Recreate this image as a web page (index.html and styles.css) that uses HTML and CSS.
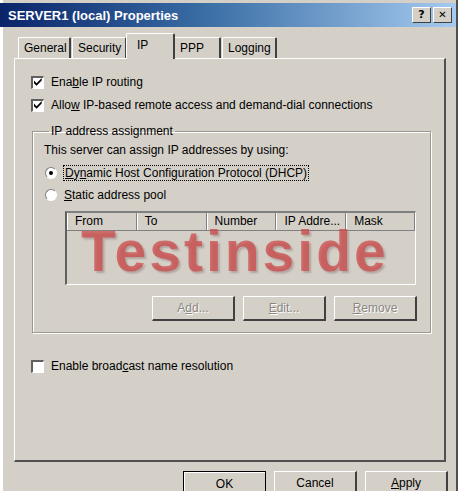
FILE: index.html
```html
<!DOCTYPE html>
<html>
<head>
<meta charset="utf-8">
<link rel="stylesheet" href="styles.css">
</head>
<body>
<div class="dialog">
  <div class="titlebar">
    <span class="title">SERVER1 (local) Properties</span>
    <div class="tbtns">
      <span class="tbtn">?</span>
      <span class="tbtn x">✕</span>
    </div>
  </div>
  <div class="tabs">
    <span class="tab t1">General</span>
    <span class="tab t2">Security</span>
    <span class="tab sel t3">IP</span>
    <span class="tab t4">PPP</span>
    <span class="tab t5">Logging</span>
  </div>
  <div class="panel">
    <div class="check row1">
      <span class="box"><svg width="9" height="9" viewBox="0 0 7 7"><path d="M0 2 L2 4 L6 0 L6 2 L2 6 L0 4 Z" fill="#000"/></svg></span>
      <span>Ena<u>b</u>le IP routing</span>
    </div>
    <div class="check row2">
      <span class="box"><svg width="9" height="9" viewBox="0 0 7 7"><path d="M0 2 L2 4 L6 0 L6 2 L2 6 L0 4 Z" fill="#000"/></svg></span>
      <span>Allo<u>w</u> IP-based remote access and demand-dial connections</span>
    </div>
    <fieldset class="group">
      <legend>IP address assignment</legend>
      <div class="intro">This server can assign IP addresses by using:</div>
      <div class="radio r1"><span class="rb on"></span><span class="focus"><u>D</u>y<u>n</u>amic Host Configuration Protocol (DHCP)</span></div>
      <div class="radio r2"><span class="rb"></span><span><u>S</u>tatic address pool</span></div>
      <div class="list">
        <div class="lhead">
          <span class="col">From</span>
          <span class="col">To</span>
          <span class="col">Number</span>
          <span class="col">IP Addre...</span>
          <span class="col">Mask</span>
        </div>
        <div class="watermark">Testinside</div>
      </div>
      <div class="lbtns">
        <span class="btn dis">A<u>d</u>d...</span>
        <span class="btn dis"><u>E</u>dit...</span>
        <span class="btn dis"><u>R</u>emove</span>
      </div>
    </fieldset>
    <div class="check row3">
      <span class="box"></span>
      <span>Enable broad<u>c</u>ast name resolution</span>
    </div>
  </div>
  <div class="footer">
    <span class="btn def">OK</span>
    <span class="btn">Cancel</span>
    <span class="btn"><u>A</u>pply</span>
  </div>
</div>
</body>
</html>
```
FILE: styles.css
```css
html, body {
  margin: 0;
  padding: 0;
  background: #ffffff;
}
body {
  font-family: "Liberation Sans", Arial, sans-serif;
  font-size: 12px;
  color: #000;
  width: 471px;
  height: 491px;
  overflow: hidden;
}
.dialog {
  margin-left: 2px;
  width: 453px;
  height: 500px;
  background: #d4d0c8;
  border-left: 1px solid #ffffff;
  border-right: 2px solid #505050;
  padding-top: 3px;
  box-sizing: content-box;
  background-clip: padding-box;
  display: flex;
  flex-direction: column;
}
.titlebar {
  height: 24px;
  margin-left: -3px;
  background: linear-gradient(to right, #0a246a 0%, #3a6ea5 45%, #a6caf0 100%);
  display: flex;
  align-items: center;
  justify-content: space-between;
  padding: 0 4px 0 8px;
}
.title {
  color: #fff;
  font-family: "Liberation Sans", Arial, sans-serif;
  font-weight: bold;
  font-size: 13px;
}
.tbtns {
  display: flex;
  gap: 2px;
}
.tbtn {
  width: 17px;
  height: 14px;
  background: #d4d0c8;
  border-top: 1px solid #fff;
  border-left: 1px solid #fff;
  border-right: 1px solid #404040;
  border-bottom: 1px solid #404040;
  font-family: "DejaVu Sans", sans-serif;
  font-weight: bold;
  font-size: 11px;
  line-height: 14px;
  text-align: center;
}
.tbtn.x { font-size: 10px; }
.tabs {
  display: flex;
  align-items: flex-end;
  margin-top: 6px;
  padding-left: 15px;
  height: 25px;
}
.tab {
  height: 21px;
  line-height: 21px;
  padding: 0 5px;
  border-top: 1px solid #fff;
  border-left: 1px solid #fff;
  border-right: 2px solid #404040;
  border-radius: 2px 2px 0 0;
  margin-right: 1px;
  box-sizing: border-box;
}
.t1 { width: 53px; }
.t2 { width: 55px; }
.t3 { width: 49px; }
.t4 { width: 47px; }
.t5 { width: 55px; }
.tab.sel {
  height: 26px;
  line-height: 22px;
  padding-left: 10px;
  margin-bottom: -1px;
  margin-left: -2px;
  margin-right: -1px;
  background: #d4d0c8;
  position: relative;
  z-index: 1;
}
.panel {
  margin-left: 11px;
  width: 432px;
  height: 404px;
  box-sizing: border-box;
  border-top: 1px solid #fff;
  border-left: 1px solid #fff;
  border-right: 2px solid #505050;
  border-bottom: 2px solid #505050;
  padding: 15px 0 0 16px;
  display: flex;
  flex-direction: column;
}
.check {
  display: flex;
  align-items: center;
  gap: 7px;
  height: 16px;
}
.row2 { margin-top: 7px; }
.row3 { margin-top: 25px; }
.box {
  width: 13px;
  height: 13px;
  box-sizing: border-box;
  border-top: 2px solid #606060;
  border-left: 2px solid #606060;
  border-right: 1px solid #fff;
  border-bottom: 1px solid #fff;
  background: #fff;
  display: flex;
  align-items: center;
  justify-content: center;
}
.group {
  margin: 11px 0 0 1px;
  width: 399px;
  height: 209px;
  box-sizing: border-box;
  border: 1px solid #9a9890;
  box-shadow: inset 1px 1px 0 #fff, 1px 1px 0 #fff;
  padding: 4px 0 0 11px;
  display: flex;
  flex-direction: column;
}
.group legend {
  padding: 0 2px;
  margin-left: 5px;
}
.intro { height: 16px; line-height: 16px; }
.radio {
  display: flex;
  align-items: center;
  gap: 7px;
  height: 18px;
  margin-left: 1px;
}
.r1 { margin-top: 6px; }
.r2 { margin-top: 4px; }
.rb {
  width: 12px;
  height: 12px;
  border-radius: 50%;
  box-sizing: border-box;
  background: #fff;
  border: 1px solid;
  border-color: #808080 #fff #fff #808080;
  display: flex;
  align-items: center;
  justify-content: center;
}
.rb.on::after {
  content: "";
  width: 4px;
  height: 4px;
  border-radius: 50%;
  background: #000;
}
.focus {
  outline: 1px dotted #000;
  outline-offset: 0;
  padding: 0 1px;
}
.list {
  position: relative;
  margin: 7px 0 0 21px;
  width: 351px;
  height: 74px;
  box-sizing: border-box;
  background: #d4d0c8;
  border-top: 2px solid #808080;
  border-left: 2px solid #606060;
  border-right: 1px solid #fff;
  border-bottom: 1px solid #fff;
}
.lhead {
  display: flex;
  height: 17px;
  border-bottom: 1px solid #808080;
}
.col {
  width: 70px;
  box-sizing: border-box;
  padding-left: 7px;
  line-height: 17px;
  border-left: 1px solid #fff;
  border-right: 1px solid #808080;
  white-space: nowrap;
}
.col:last-child { width: 69px; }
.watermark {
  position: absolute;
  left: 14px;
  top: 18px;
  font-family: "Liberation Sans", Arial, sans-serif;
  font-weight: bold;
  font-size: 57px;
  letter-spacing: 3px;
  color: rgba(205, 70, 70, 0.72);
  text-shadow: 2px 2px 2px rgba(140, 110, 110, 0.45);
  line-height: 0.72;
}
.lbtns {
  display: flex;
  gap: 8px;
  margin: 11px 0 0 108px;
}
.btn {
  width: 83px;
  height: 25px;
  box-sizing: border-box;
  border-top: 1px solid #fff;
  border-left: 1px solid #fff;
  border-right: 2px solid #404040;
  border-bottom: 2px solid #404040;
  display: flex;
  align-items: center;
  justify-content: center;
}
.btn.dis {
  color: #8a8780;
  text-shadow: 1px 1px 0 #fff;
}
.footer {
  display: flex;
  gap: 8px;
  margin: 9px 0 0 180px;
}
.btn.def {
  border: 1px solid #000;
  box-shadow: inset 1px 1px 0 #fff;
}
```
